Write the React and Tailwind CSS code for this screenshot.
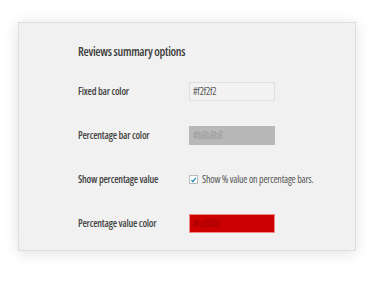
import React from 'react';

const rows = [
  { label: 'Fixed bar color', value: '#f2f2f2', bg: 'bg-[#f2f2f2]', text: 'text-[#555]', border: 'border-[#e0e0e0]' },
  { label: 'Percentage bar color', value: '#b8b8b8', bg: 'bg-[#b8b8b8]', text: 'text-[#9a9a9a]', border: 'border-[#b8b8b8]' },
];

export default function App() {
  return (
    <div className="w-[377px] h-[283px] bg-white pt-[22px] pl-[18px] font-['Open_Sans',sans-serif] font-stretch-condensed">
      <div className="w-[338px] h-[229px] bg-[#f1f1f1] border border-[#dedede] shadow-[0_2px_14px_rgba(0,0,0,0.12)] pl-[59px] pt-[21px]">
        <h2 className="text-[12px] leading-[16px] font-semibold text-[#3c3c3c] tracking-[-0.3px] whitespace-nowrap">Reviews summary options</h2>
        <div className="mt-[22px] flex flex-col gap-[25px]">
          {rows.map((r) => (
            <div key={r.label} className="flex items-center h-[19px]">
              <span className="w-[111px] text-[10px] font-semibold text-[#444] tracking-[-0.2px] whitespace-nowrap">{r.label}</span>
              <div className={`w-[86px] h-[19px] border ${r.border} ${r.bg} ${r.text} text-[10px] leading-[17px] pl-[3px] tracking-[-0.2px]`}>{r.value}</div>
            </div>
          ))}
          <div className="flex items-center h-[19px]">
            <span className="w-[111px] text-[10px] font-semibold text-[#444] tracking-[-0.2px] whitespace-nowrap">Show percentage value</span>
            <div className="flex items-center gap-[4px]">
              <span className="w-[9px] h-[9px] bg-white border border-[#bbb] flex items-center justify-center">
                <svg viewBox="0 0 10 10" className="w-[8px] h-[8px]">
                  <path d="M2 5.2 L4 7.5 L8.2 2" fill="none" stroke="#1e8cbe" strokeWidth="1.8" />
                </svg>
              </span>
              <span className="text-[10px] text-[#555] tracking-[-0.2px] whitespace-nowrap">Show % value on percentage bars.</span>
            </div>
          </div>
          <div className="flex items-center h-[19px]">
            <span className="w-[111px] text-[10px] font-semibold text-[#444] tracking-[-0.2px] whitespace-nowrap">Percentage value color</span>
            <div className="w-[86px] h-[19px] border border-[#e88] bg-[#cc0000] text-[#a00000] text-[10px] leading-[17px] pl-[3px] tracking-[-0.2px]">#cc0000</div>
          </div>
        </div>
      </div>
    </div>
  );
}
